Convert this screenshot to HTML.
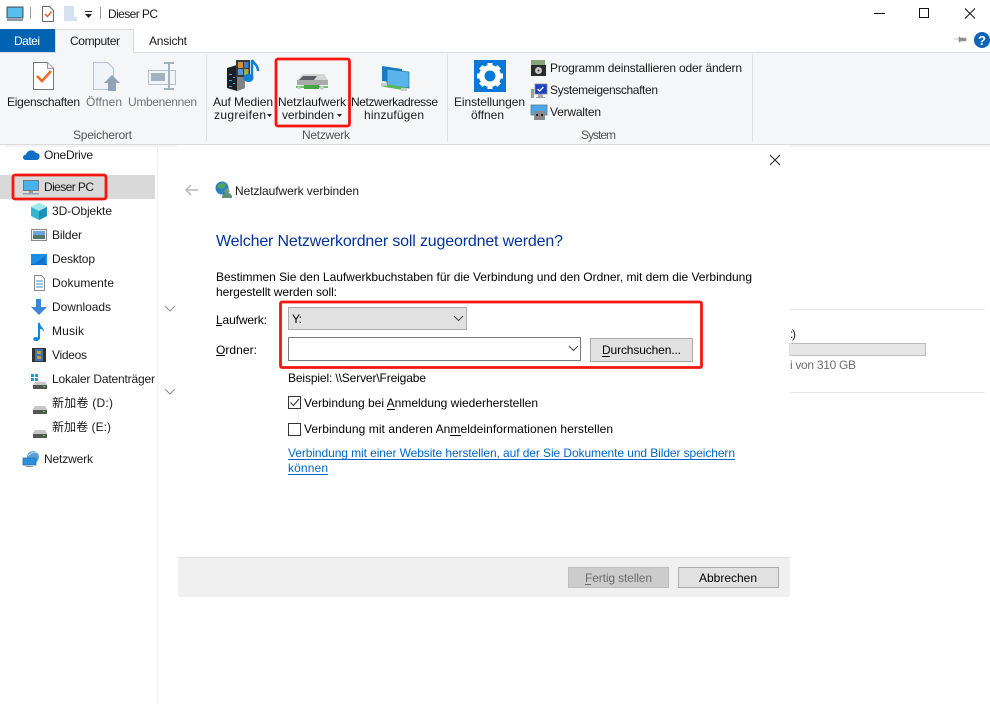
<!DOCTYPE html>
<html lang="de"><head><meta charset="utf-8"><title>Dieser PC</title>
<style>
html,body{margin:0;padding:0;background:#fff;width:990px;height:704px;overflow:hidden}
svg{display:block;position:absolute;left:0;top:0}
text{font-family:"Liberation Sans","Noto Sans CJK SC",sans-serif;font-size:12px;fill:#1a1a1a;white-space:pre}
.g{fill:#6f7378}.l{fill:#555}.b{fill:#000}
</style></head><body>
<svg width="990" height="704" viewBox="0 0 990 704" xmlns="http://www.w3.org/2000/svg">
<!-- title bar -->
<rect x="7" y="7" width="16" height="11" fill="#3aa0e6" stroke="#555" stroke-width="1"/>
<rect x="8" y="8" width="14" height="9" fill="#56c0f0"/>
<rect x="7" y="19" width="16" height="2" fill="#8a9aa8"/>
<rect x="30" y="7" width="1" height="12" fill="#999"/>
<path d="M42.500 6.500h7l4 4v11h-11z" fill="#fff" stroke="#666"/>
<path d="M45 14l2.500 2.500 4-5" fill="none" stroke="#e8632c" stroke-width="1.500"/>
<path d="M64 6h10v11h3v4h-13z" fill="#d6e2f2"/>
<rect x="85" y="11" width="7" height="1" fill="#222"/><path d="M85 14h7l-3.500 4z" fill="#222"/>
<rect x="100" y="7" width="1" height="12" fill="#999"/>
<text x="108" y="18" textLength="50">Dieser PC</text>
<rect x="874" y="13" width="11" height="1" fill="#111"/>
<rect x="919.500" y="8.500" width="9" height="9" fill="none" stroke="#111"/>
<path d="M965 8.500l10 10M975 8.500l-10 10" stroke="#111" fill="none"/>
<!-- tabs -->
<rect x="0" y="29" width="55" height="23" fill="#0063b1"/>
<text x="14" y="45" textLength="26" style="fill:#fff">Datei</text>
<rect x="55.500" y="29.500" width="78" height="24" fill="#f5f6f7" stroke="#dadbdc"/>
<text x="70" y="45" textLength="50">Computer</text>
<text x="149" y="45" textLength="38">Ansicht</text>
<path d="M954 39h5M959 37h1v5h-1zM960 38h6v3h-6z" fill="#8f8f8f" stroke="#8f8f8f" stroke-width=".6"/>
<circle cx="982" cy="40" r="8" fill="#0a65b8"/>
<text x="978" y="45" style="font-size:13px;font-weight:bold;fill:#fff">?</text>
<!-- ribbon -->
<rect x="0" y="52" width="990" height="1" fill="#dadbdc"/>
<rect x="0" y="53" width="990" height="91" fill="#f5f6f7"/>
<rect x="56" y="52" width="77" height="2" fill="#f5f6f7"/>
<rect x="0" y="144" width="990" height="1" fill="#dadbdc"/>
<rect x="5" y="145" width="172" height="2" fill="#f4f4f4"/>
<rect x="790" y="145" width="200" height="2" fill="#f4f4f4"/>
<rect x="206" y="55" width="1" height="86" fill="#dfe0e1"/>
<rect x="447" y="55" width="1" height="86" fill="#dfe0e1"/>
<rect x="752" y="55" width="1" height="86" fill="#dfe0e1"/>
<!-- Eigenschaften icon -->
<path d="M33.500 62.500h14l6 6v21h-20z" fill="#fff" stroke="#777"/>
<path d="M47.500 62.500v6h6" fill="#eee" stroke="#999"/>
<path d="M37 76l5 5 9-10" fill="none" stroke="#ee6a24" stroke-width="2.500"/>
<!-- Öffnen icon -->
<path d="M93.500 62.500h14l6 6v21h-20z" fill="#f0f4fa" stroke="#b4c2d6"/>
<path d="M108 91v-8h-4l8-8 8 8h-4v8z" fill="#93a2b4"/>
<!-- Umbenennen icon -->
<rect x="148.500" y="70.500" width="27" height="14" fill="#f2f5f8" stroke="#b4c0cc"/>
<rect x="151" y="73" width="14" height="8" fill="#a3b1c0"/>
<path d="M164 63h10M164 89h10M169 63v26" stroke="#a6b2bf" stroke-width="2" fill="none"/>
<text x="7" y="106" textLength="73">Eigenschaften</text>
<text x="86" y="106" textLength="36" class="g">Öffnen</text>
<text x="128" y="106" textLength="69" class="g">Umbenennen</text>
<text x="73" y="139" textLength="59" class="l">Speicherort</text>
<!-- Auf Medien icon -->
<path d="M227 68l10-3 8 3v20l-8 3-10-3z" fill="#1b1f24"/>
<path d="M237 65l8 3v20l-8 3z" fill="#808285"/>
<rect x="229" y="74" width="3" height="1" fill="#39a8f0"/><rect x="233" y="77" width="2" height="1" fill="#39a8f0"/><rect x="229" y="80" width="3" height="1" fill="#39a8f0"/><rect x="233" y="83" width="2" height="1" fill="#39a8f0"/><rect x="229" y="86" width="3" height="1" fill="#39a8f0"/>
<rect x="236" y="60" width="14" height="17" fill="#3a3a3a"/>
<rect x="238" y="62" width="5" height="6" fill="#d9902e"/><rect x="244" y="62" width="4.500" height="6" fill="#3f7ec9"/><rect x="238" y="69" width="5" height="6" fill="#4f9ad8"/><rect x="244" y="69" width="4.500" height="6" fill="#9ab040"/>
<path d="M252 60v18" stroke="#0f7fd8" stroke-width="2.500"/><path d="M252 60c2 4 6 5 6 11" stroke="#0f7fd8" stroke-width="2.500" fill="none"/><ellipse cx="248.500" cy="78" rx="5" ry="4" fill="#0f7fd8"/>
<text x="213" y="106" textLength="60">Auf Medien</text>
<text x="214" y="119" textLength="52">zugreifen</text>
<path d="M267 114h5l-2.500 3z" fill="#222"/>
<!-- network drive icon -->
<path d="M297 80l6-6h21l4 6v5h-31z" fill="#d3d6d3"/>
<path d="M297 80h31v5h-31z" fill="#a8aca8"/>
<path d="M299 80l4-4h14l-3 4z" fill="#5d6063"/>
<path d="M296 87h32" stroke="#6fc36f" stroke-width="2"/>
<rect x="304" y="85" width="15" height="4" fill="#44a644"/>
<circle cx="322" cy="88" r="2" fill="#c8d0c8"/><circle cx="299" cy="88" r="1.500" fill="#c8d0c8"/>
<text x="278" y="106" textLength="68">Netzlaufwerk</text>
<text x="282" y="119" textLength="52">verbinden</text>
<path d="M337 114h5l-2.500 3z" fill="#222"/>
<!-- network address icon -->
<path d="M382 66l20 3v15l-20-3z" fill="#1c7cc4"/>
<path d="M387 69l22 3v16l-22-3z" fill="#5ab4ea" stroke="#1c6ea8" stroke-width=".7"/>
<path d="M382 85l24 4" stroke="#5cb85c" stroke-width="3"/>
<path d="M381 83h6v3h-6zM401 88h6v3h-6z" fill="#c2d0c2"/>
<text x="351" y="106" textLength="87">Netzwerkadresse</text>
<text x="364" y="119" textLength="60">hinzufügen</text>
<text x="302" y="139" textLength="48" class="l">Netzwerk</text>
<!-- gear -->
<rect x="474" y="60" width="32" height="32" fill="#0a78d7"/>
<circle cx="490" cy="76" r="8" fill="none" stroke="#fff" stroke-width="6"/>
<path d="M490 63v26M477 76h26M480.800 66.800l18.400 18.400M499.200 66.800l-18.400 18.400" stroke="#fff" stroke-width="5" fill="none"/>
<circle cx="490" cy="76" r="5.500" fill="#0a78d7"/>
<text x="454" y="106" textLength="71">Einstellungen</text>
<text x="471" y="119" textLength="33">öffnen</text>
<!-- System small icons -->
<rect x="531" y="60" width="14" height="7" fill="#8aa37a"/>
<rect x="531" y="65" width="15" height="11" fill="#2b2b2b"/>
<circle cx="538.500" cy="70.500" r="3.500" fill="#c9c9c9"/><circle cx="538.500" cy="70.500" r="1" fill="#333"/>
<rect x="535" y="84" width="12" height="10" fill="#1d3fc4" stroke="#888" stroke-width=".8"/>
<path d="M537.500 89l2 2 4-4" stroke="#fff" stroke-width="1.300" fill="none"/>
<rect x="531" y="89" width="3" height="9" fill="#9aa09a"/><rect x="531.500" y="90" width="2" height="2" fill="#3dd13d"/>
<rect x="538" y="94" width="5" height="3" fill="#aaa"/>
<rect x="536" y="97" width="9" height="1" fill="#999"/>
<rect x="531" y="105" width="16" height="10" fill="#4aa8e8" stroke="#5a7a95" stroke-width=".8"/>
<rect x="534" y="111" width="11" height="9" fill="#8a8a8a"/><rect x="536" y="114" width="2" height="2" fill="#222"/><rect x="541" y="114" width="2" height="2" fill="#222"/>
<text x="550" y="72" textLength="192">Programm deinstallieren oder ändern</text>
<text x="550" y="94" textLength="108">Systemeigenschaften</text>
<text x="550" y="116" textLength="51">Verwalten</text>
<text x="581" y="139" textLength="35" class="l">System</text>
<!-- sidebar -->
<rect x="157" y="145" width="1" height="559" fill="#f0f0f0"/>
<rect x="0" y="175" width="155" height="24" fill="#d9d9d9"/>
<path d="M26 160c-4 0-4-5 0-5.500 1-4 7-6 10-1.500 3 0 4 2 3.500 4-.3 2-1.500 3-3 3z" fill="#0e6fc4"/>
<text x="44" y="159" textLength="49">OneDrive</text>
<rect x="23.500" y="180.500" width="15" height="10" fill="#45b4ee" stroke="#777"/>
<rect x="23" y="193" width="16" height="1.500" fill="#8fa0ae"/><rect x="29" y="191" width="4" height="2" fill="#999"/>
<text x="44" y="191" textLength="50">Dieser PC</text>
<!-- nav icons -->
<path d="M31 207l8-4 8 4v9l-8 4-8-4z" fill="#30b5d3"/><path d="M31 207l8 4 8-4-8-4z" fill="#9fe8ef"/><path d="M39 211v9l8-4v-9z" fill="#1c8fb8"/>
<text x="52" y="215" textLength="60">3D-Objekte</text>
<rect x="31.500" y="229.500" width="15" height="11" fill="#f0f0f0" stroke="#888"/><rect x="33" y="231" width="12" height="4" fill="#6aa6dc"/><rect x="33" y="235" width="12" height="4" fill="#55786a"/>
<text x="52" y="239" textLength="30">Bilder</text>
<rect x="31" y="254" width="16" height="11" fill="#1b8fe8"/><rect x="31" y="264" width="16" height="1" fill="#0b5fa8"/><path d="M33 265l12-9v9z" fill="#0d74d2"/>
<text x="52" y="263" textLength="43">Desktop</text>
<path d="M34.500 275.500h7l3 3v12h-10z" fill="#fff" stroke="#888"/><path d="M36 281h7M36 284h7M36 287h7" stroke="#3b8fd0"/>
<text x="52" y="287" textLength="62">Dokumente</text>
<path d="M36 299h5v8h6l-8 8-8-8h5z" fill="#3a86d8"/>
<text x="52" y="311" textLength="59">Downloads</text>
<path d="M38 323h2c0 4 4 4 4 9-1-2-2-3-4-3v9c0 2-2 3-4 3-3 0-4-3-1-4 1 0 2 0 3 .5z" fill="#0f87e0"/>
<text x="52" y="335" textLength="32">Musik</text>
<rect x="32" y="348" width="14" height="14" fill="#333"/><rect x="35" y="349" width="8" height="12" fill="#3f6fb8"/><rect x="37" y="351" width="4" height="3" fill="#c8a020"/><rect x="37" y="356" width="4" height="3" fill="#c8a020"/>
<text x="52" y="359" textLength="35">Videos</text>
<rect x="31" y="374" width="3" height="3" fill="#1a9fe8"/><rect x="35" y="374" width="3" height="3" fill="#1a9fe8"/><rect x="31" y="378" width="3" height="3" fill="#1a9fe8"/><rect x="35" y="378" width="3" height="3" fill="#1a9fe8"/>
<path d="M35 382h10l2 2v1H33z" fill="#c8c8c8"/><rect x="33" y="385" width="14" height="4" fill="#555"/><rect x="43" y="386" width="2" height="1" fill="#4fd04f"/>
<text x="52" y="383" textLength="103">Lokaler Datenträger</text>
<path d="M35 406h10l2 3v1H33v-1z" fill="#c8c8c8"/><rect x="33" y="410" width="14" height="4" fill="#555"/><rect x="43" y="411" width="2" height="1" fill="#4fd04f"/>
<text x="52" y="407" textLength="61">新加卷 (D:)</text>
<path d="M35 430h10l2 3v1H33v-1z" fill="#c8c8c8"/><rect x="33" y="434" width="14" height="4" fill="#555"/><rect x="43" y="435" width="2" height="1" fill="#4fd04f"/>
<text x="52" y="431" textLength="59">新加卷 (E:)</text>
<circle cx="33" cy="457" r="6" fill="#5a9fd8"/><path d="M28 456c3-3 5-5 9-3" stroke="#b8d8f0" fill="none"/>
<rect x="23" y="458" width="13" height="7" fill="#2b8fe0" stroke="#2a6fa8" stroke-width=".8"/><rect x="26" y="466" width="7" height="1" fill="#8a9aa8"/>
<text x="44" y="463" textLength="49">Netzwerk</text>
<path d="M165 306l5 5 5-5M165 389l5 5 5-5" fill="none" stroke="#8c8c8c"/>
<!-- background right content -->
<rect x="790" y="309" width="195" height="1" fill="#e8e8e8"/>
<rect x="790" y="392" width="195" height="1" fill="#e8e8e8"/>
<text x="790" y="338" textLength="6">:)</text>
<rect x="790" y="343.500" width="135.500" height="12" fill="#e6e6e6" stroke="#bcbcbc"/>
<rect x="790" y="343" width="1" height="13" fill="#e6e6e6"/>
<text x="790" y="369" textLength="66" style="fill:#6d6d6d">i von 310 GB</text>
<!-- dialog -->
<path d="M770 155l10 10M780 155l-10 10" stroke="#222" fill="none"/>
<path d="M198 190h-11M191 185l-5 5 5 5" stroke="#b8b8b8" stroke-width="1.500" fill="none"/>
<circle cx="222" cy="188" r="6.500" fill="#2d7fbd"/><path d="M217 186c3-3 6-4 9-2l-2 4-4 1z" fill="#4fa858"/>
<circle cx="227" cy="191" r="2.500" fill="#6f9a80"/><path d="M222 198c0-4 2-5 5-5s5 1 5 5z" fill="#5d8f78"/>
<text x="235" y="195" textLength="124">Netzlaufwerk verbinden</text>
<text x="216" y="246" textLength="347" style="font-size:16px;fill:#003399">Welcher Netzwerkordner soll zugeordnet werden?</text>
<text x="216" y="281" textLength="536" class="b">Bestimmen Sie den Laufwerkbuchstaben für die Verbindung und den Ordner, mit dem die Verbindung</text>
<text x="216" y="296" textLength="121" class="b">hergestellt werden soll:</text>
<text x="216" y="324" textLength="51" class="b">Laufwerk:</text><rect x="216" y="325" width="6" height="1" fill="#000"/>
<text x="216" y="354" textLength="41" class="b">Ordner:</text><rect x="216" y="355" width="9" height="1" fill="#000"/>
<rect x="288.500" y="307.500" width="178" height="22" fill="#e1e1e1" stroke="#adadad"/>
<text x="292" y="323" textLength="10" class="b">Y:</text>
<path d="M454 316l4.500 4.500 4.500-4.500" fill="none" stroke="#444"/>
<rect x="288.500" y="337.500" width="292" height="23" fill="#fff" stroke="#7a7a7a"/>
<path d="M569 346l4.500 4.500 4.500-4.500" fill="none" stroke="#444"/>
<rect x="590.500" y="338.500" width="102" height="23" fill="#e1e1e1" stroke="#adadad"/>
<text x="602" y="354" textLength="79" class="b">Durchsuchen...</text><rect x="602" y="356" width="8" height="1" fill="#000"/>
<text x="288" y="382" textLength="138" class="b">Beispiel: \\Server\Freigabe</text>
<rect x="288.500" y="396.500" width="12" height="12" fill="#fff" stroke="#333"/>
<path d="M290.500 402.500l3 3 5.500-6.500" fill="none" stroke="#333" stroke-width="1.100"/>
<text x="304" y="407" textLength="234" class="b">Verbindung bei Anmeldung wiederherstellen</text><rect x="387" y="409" width="8" height="1" fill="#000"/>
<rect x="288.500" y="423.500" width="12" height="12" fill="#fff" stroke="#333"/>
<text x="304" y="433" textLength="309" class="b">Verbindung mit anderen Anmeldeinformationen herstellen</text><rect x="450" y="435" width="11" height="1" fill="#000"/>
<text x="288" y="457" textLength="447" style="fill:#0066cc">Verbindung mit einer Website herstellen, auf der Sie Dokumente und Bilder speichern</text>
<rect x="288" y="459" width="447" height="1" fill="#0066cc"/>
<text x="288" y="472" textLength="40" style="fill:#0066cc">können</text>
<rect x="288" y="474" width="40" height="1" fill="#0066cc"/>
<!-- footer -->
<rect x="178" y="557" width="612" height="40" fill="#f0f0f0"/>
<rect x="178" y="557" width="612" height="1" fill="#dfdfdf"/>
<rect x="568.500" y="567.500" width="100" height="20" fill="#cccccc" stroke="#bfbfbf"/>
<text x="585" y="582" textLength="67" style="fill:#6d6d6d">Fertig stellen</text><rect x="585" y="584" width="6" height="1" fill="#6d6d6d"/>
<rect x="678.500" y="567.500" width="100" height="20" fill="#e1e1e1" stroke="#adadad"/>
<text x="699" y="582" textLength="58" class="b">Abbrechen</text>
<!-- red highlights -->
<rect x="276" y="59" width="73.500" height="67" rx="2" fill="none" stroke="#f5160f" stroke-width="2.800"/>
<rect x="13" y="175" width="93" height="24" rx="2" fill="none" stroke="#f5160f" stroke-width="2.800"/>
<rect x="280.500" y="302" width="421" height="65.500" rx="1.500" fill="none" stroke="#f5160f" stroke-width="2.800"/>
</svg>
</body></html>
